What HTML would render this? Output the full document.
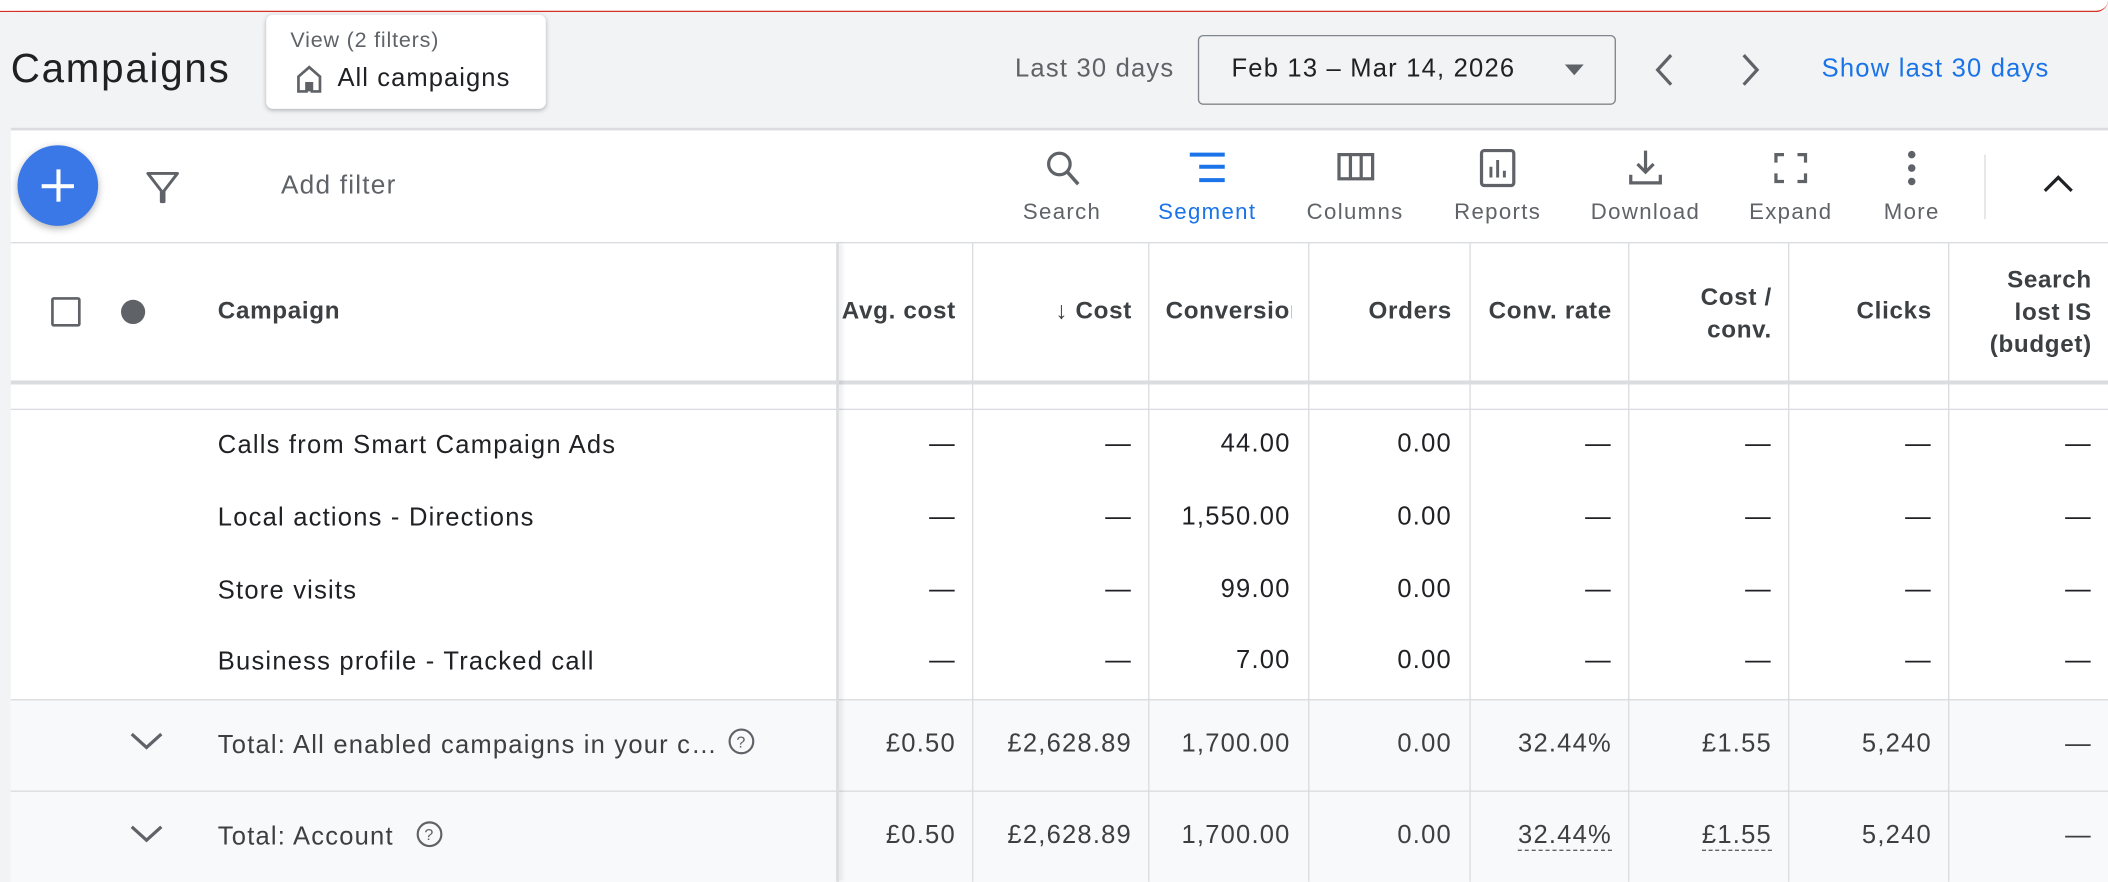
<!DOCTYPE html>
<html><head><meta charset="utf-8"><style>
*{box-sizing:border-box;margin:0;padding:0}
html,body{width:2108px;height:882px;overflow:hidden;background:#f1f3f4}
#s{position:absolute;left:0;top:0;width:1568px;height:656px;transform:scale(1.344388);transform-origin:0 0;font-family:"Liberation Sans",Arial,sans-serif;color:#202124;background:#f1f3f4;overflow:hidden;letter-spacing:0.9px}
.a{position:absolute;white-space:nowrap}
.c{position:absolute;text-align:right;font-size:19px;line-height:20px;white-space:nowrap;letter-spacing:0.9px}
.h{font-size:18px;font-weight:bold;color:#3c4043;letter-spacing:0.5px}
.vl{position:absolute;top:181px;bottom:0;width:1px;background:#dadce0}
.tl{position:absolute;font-size:16.5px;color:#5f6368;text-align:center;width:120px;top:149px;letter-spacing:1px}
.du{border-bottom:1px dashed #5f6368}
.t{font-size:19px}
</style></head><body><div id="s">
<div class="a" style="left:0;top:0;width:1568px;height:9px;background:#fff;border-bottom:1.5px solid #d93025;border-radius:0 0 10px 0"></div>
<div class="a" style="left:8px;top:34px;font-size:30px;line-height:36px;color:#202124;letter-spacing:1.3px">Campaigns</div>
<div class="a" style="left:198px;top:11px;width:208px;height:70px;background:#fff;border-radius:5px;box-shadow:0 1px 3px rgba(60,64,67,.35)">
 <div class="a" style="left:18px;top:11px;font-size:16px;color:#5f6368;letter-spacing:0.6px">View (2 filters)</div>
 <svg class="a" style="left:20px;top:36px" width="24" height="24" viewBox="0 0 24 24"><path d="M4 21V10l8-7 8 7v11h-6v-6h-4v6z" fill="none" stroke="#5f6368" stroke-width="2"/><rect x="10" y="14" width="4" height="7" fill="#5f6368"/></svg>
 <div class="a" style="left:53px;top:37px;font-size:19px;color:#202124;letter-spacing:0.8px">All campaigns</div>
</div>
<div class="a t" style="left:755px;top:41px;color:#5f6368">Last 30 days</div>
<div class="a" style="left:891px;top:26px;width:311px;height:52px;border:1px solid #80868b;border-radius:4px"></div>
<div class="a t" style="left:916px;top:41px;color:#202124">Feb 13 – Mar 14, 2026</div>
<div class="a" style="left:1164px;top:48px;border-left:7px solid transparent;border-right:7px solid transparent;border-top:8px solid #5f6368"></div>
<svg class="a" style="left:1226px;top:38px" width="24" height="28" viewBox="0 0 24 28"><path d="M17 3L7 14l10 11" fill="none" stroke="#5f6368" stroke-width="2.4"/></svg>
<svg class="a" style="left:1290px;top:38px" width="24" height="28" viewBox="0 0 24 28"><path d="M7 3l10 11L7 25" fill="none" stroke="#5f6368" stroke-width="2.4"/></svg>
<div class="a t" style="left:1355px;top:41px;color:#1a73e8">Show last 30 days</div>
<div class="a" style="left:8px;top:95px;width:1560px;height:561px;background:#fff;border-top:2px solid #dadce0"></div>
<div class="a" style="left:13px;top:108px;width:60px;height:60px;border-radius:50%;background:#3b78e7;box-shadow:0 2px 6px rgba(0,0,0,.3)"></div>
<div class="a" style="left:42px;top:126px;width:2.5px;height:24px;background:#fff"></div>
<div class="a" style="left:31px;top:137px;width:24px;height:2.5px;background:#fff"></div>
<svg class="a" style="left:108px;top:126px" width="26" height="26" viewBox="0 0 26 26"><path d="M2 3h22L14 16v8h-2v-8z" fill="none" stroke="#5f6368" stroke-width="2.2" stroke-linejoin="round"/></svg>
<div class="a" style="left:209px;top:127px;font-size:19.5px;color:#5f6368;letter-spacing:0.9px">Add filter</div>
<svg class="a" style="left:776px;top:110px" width="28" height="30" viewBox="0 0 28 30"><circle cx="12" cy="12" r="8" fill="none" stroke="#5f6368" stroke-width="2.4"/><path d="M18 18l8 9" stroke="#5f6368" stroke-width="2.6"/></svg>
<div class="tl" style="left:730px">Search</div>
<svg class="a" style="left:884px;top:112px" width="30" height="26" viewBox="0 0 30 26"><path d="M1 3h26M8 12h19M8 22h19" stroke="#1a73e8" stroke-width="3"/></svg>
<div class="tl" style="left:838px;color:#1a73e8">Segment</div>
<svg class="a" style="left:994px;top:112px" width="30" height="26" viewBox="0 0 30 26"><rect x="2" y="3" width="25" height="18" fill="none" stroke="#5f6368" stroke-width="2.4"/><path d="M10.5 3v18M18.5 3v18" stroke="#5f6368" stroke-width="2.4"/></svg>
<div class="tl" style="left:948px">Columns</div>
<svg class="a" style="left:1100px;top:110px" width="28" height="30" viewBox="0 0 28 30"><rect x="2" y="2" width="24" height="26" rx="2" fill="none" stroke="#5f6368" stroke-width="2.4"/><path d="M9 22v-8M14 22V9M19 22v-5" stroke="#5f6368" stroke-width="2.2"/></svg>
<div class="tl" style="left:1054px">Reports</div>
<svg class="a" style="left:1210px;top:110px" width="28" height="30" viewBox="0 0 28 30"><path d="M14 2v16M8 12l6 6 6-6" fill="none" stroke="#5f6368" stroke-width="2.4"/><path d="M3 20v6h22v-6" fill="none" stroke="#5f6368" stroke-width="2.4"/></svg>
<div class="tl" style="left:1164px">Download</div>
<svg class="a" style="left:1318px;top:112px" width="28" height="26" viewBox="0 0 28 26"><path d="M3 9V3h6M19 3h6v6M25 17v6h-6M9 23H3v-6" fill="none" stroke="#5f6368" stroke-width="2.4"/></svg>
<div class="tl" style="left:1272px">Expand</div>
<svg class="a" style="left:1412px;top:110px" width="20" height="30" viewBox="0 0 20 30"><circle cx="10" cy="5" r="2.8" fill="#5f6368"/><circle cx="10" cy="15" r="2.8" fill="#5f6368"/><circle cx="10" cy="25" r="2.8" fill="#5f6368"/></svg>
<div class="tl" style="left:1362px">More</div>
<div class="a" style="left:1476px;top:115px;width:1px;height:48px;background:#dadce0"></div>
<svg class="a" style="left:1518px;top:128px" width="26" height="18" viewBox="0 0 26 18"><path d="M3 14l10-10 10 10" fill="none" stroke="#202124" stroke-width="2.4"/></svg>
<div class="a" style="left:8px;top:180px;width:1560px;height:1px;background:#dadce0"></div>
<!-- header -->
<div class="a" style="left:38px;top:221px;width:22px;height:22px;border:2px solid #5f6368;border-radius:2px"></div>
<div class="a" style="left:90px;top:223px;width:18px;height:18px;border-radius:50%;background:#5f6368"></div>
<div class="a h" style="left:162px;top:221px">Campaign</div>
<div class="c h" style="left:612px;width:99px;top:221px">Avg. cost</div>
<div class="c h" style="left:723px;width:119px;top:221px"><span style="font-weight:normal">↓</span> Cost</div>
<div class="a h" style="left:854px;width:107px;top:221px;padding-left:13px;overflow:hidden">Conversions</div>
<div class="c h" style="left:973px;width:107px;top:221px">Orders</div>
<div class="c h" style="left:1093px;width:106px;top:221px">Conv. rate</div>
<div class="c h" style="left:1211px;width:107px;top:209px;line-height:24px">Cost /<br>conv.</div>
<div class="c h" style="left:1330px;width:107px;top:221px">Clicks</div>
<div class="c h" style="left:1449px;width:107px;top:196px;line-height:24px">Search<br>lost IS<br>(budget)</div>
<div class="a" style="left:8px;top:283px;width:1560px;height:3px;background:#dadce0"></div>
<div class="a" style="left:8px;top:304px;width:1560px;height:1px;background:#dadce0"></div>
<!-- totals bg -->
<div class="a" style="left:8px;top:520px;width:1560px;height:136px;background:#f8f9fa"></div>
<div class="a" style="left:8px;top:520px;width:1560px;height:1px;background:#dadce0"></div>
<div class="a" style="left:8px;top:588px;width:1560px;height:1px;background:#dadce0"></div>
<div class="vl" style="left:622px;width:2px;box-shadow:2px 0 3px rgba(0,0,0,.12)"></div>
<div class="vl" style="left:723px"></div><div class="vl" style="left:854px"></div><div class="vl" style="left:973px"></div><div class="vl" style="left:1093px"></div><div class="vl" style="left:1211px"></div><div class="vl" style="left:1330px"></div><div class="vl" style="left:1449px"></div>
<!-- rows -->
<div class="a t" style="left:162px;top:321px">Calls from Smart Campaign Ads</div>
<div class="a t" style="left:162px;top:375px">Local actions - Directions</div>
<div class="a t" style="left:162px;top:429px">Store visits</div>
<div class="a t" style="left:162px;top:482px">Business profile - Tracked call</div>
<div style="position:absolute;left:0;top:321px">
<div class="c" style="left:622px;width:89px">—</div><div class="c" style="left:723px;width:119px">—</div><div class="c" style="left:854px;width:106px">44.00</div><div class="c" style="left:973px;width:107px">0.00</div><div class="c" style="left:1093px;width:106px">—</div><div class="c" style="left:1211px;width:107px">—</div><div class="c" style="left:1330px;width:107px">—</div><div class="c" style="left:1449px;width:107px">—</div></div>
<div style="position:absolute;left:0;top:375px">
<div class="c" style="left:622px;width:89px">—</div><div class="c" style="left:723px;width:119px">—</div><div class="c" style="left:854px;width:106px">1,550.00</div><div class="c" style="left:973px;width:107px">0.00</div><div class="c" style="left:1093px;width:106px">—</div><div class="c" style="left:1211px;width:107px">—</div><div class="c" style="left:1330px;width:107px">—</div><div class="c" style="left:1449px;width:107px">—</div></div>
<div style="position:absolute;left:0;top:429px">
<div class="c" style="left:622px;width:89px">—</div><div class="c" style="left:723px;width:119px">—</div><div class="c" style="left:854px;width:106px">99.00</div><div class="c" style="left:973px;width:107px">0.00</div><div class="c" style="left:1093px;width:106px">—</div><div class="c" style="left:1211px;width:107px">—</div><div class="c" style="left:1330px;width:107px">—</div><div class="c" style="left:1449px;width:107px">—</div></div>
<div style="position:absolute;left:0;top:482px">
<div class="c" style="left:622px;width:89px">—</div><div class="c" style="left:723px;width:119px">—</div><div class="c" style="left:854px;width:106px">7.00</div><div class="c" style="left:973px;width:107px">0.00</div><div class="c" style="left:1093px;width:106px">—</div><div class="c" style="left:1211px;width:107px">—</div><div class="c" style="left:1330px;width:107px">—</div><div class="c" style="left:1449px;width:107px">—</div></div>
<!-- totals -->
<svg class="a" style="left:96px;top:543px" width="26" height="16" viewBox="0 0 26 16"><path d="M2 3l11 10 11-10" fill="none" stroke="#5f6368" stroke-width="2.4"/></svg>
<div class="a t" style="left:162px;top:544px;color:#3c4043">Total: All enabled campaigns in your c…</div>
<svg class="a" style="left:541px;top:541px" width="21" height="21" viewBox="0 0 21 21"><circle cx="10.5" cy="10.5" r="8.8" fill="none" stroke="#5f6368" stroke-width="1.6"/><text x="10.5" y="15" font-size="12" text-anchor="middle" fill="#5f6368" font-family="Liberation Sans">?</text></svg>
<svg class="a" style="left:96px;top:612px" width="26" height="16" viewBox="0 0 26 16"><path d="M2 3l11 10 11-10" fill="none" stroke="#5f6368" stroke-width="2.4"/></svg>
<div class="a t" style="left:162px;top:612px;color:#3c4043">Total: Account</div>
<svg class="a" style="left:309px;top:610px" width="21" height="21" viewBox="0 0 21 21"><circle cx="10.5" cy="10.5" r="8.8" fill="none" stroke="#5f6368" stroke-width="1.6"/><text x="10.5" y="15" font-size="12" text-anchor="middle" fill="#5f6368" font-family="Liberation Sans">?</text></svg>
<div style="position:absolute;left:0;top:544px;color:#3c4043">
<div class="c" style="left:622px;width:89px">£0.50</div><div class="c" style="left:723px;width:119px">£2,628.89</div><div class="c" style="left:854px;width:106px">1,700.00</div><div class="c" style="left:973px;width:107px">0.00</div><div class="c" style="left:1093px;width:106px">32.44%</div><div class="c" style="left:1211px;width:107px">£1.55</div><div class="c" style="left:1330px;width:107px">5,240</div><div class="c" style="left:1449px;width:107px">—</div></div>
<div style="position:absolute;left:0;top:612px;color:#3c4043">
<div class="c" style="left:622px;width:89px">£0.50</div><div class="c" style="left:723px;width:119px">£2,628.89</div><div class="c" style="left:854px;width:106px">1,700.00</div><div class="c" style="left:973px;width:107px">0.00</div><div class="c" style="left:1093px;width:106px"><span class="du">32.44%</span></div><div class="c" style="left:1211px;width:107px"><span class="du">£1.55</span></div><div class="c" style="left:1330px;width:107px">5,240</div><div class="c" style="left:1449px;width:107px">—</div></div>
</div></body></html>
